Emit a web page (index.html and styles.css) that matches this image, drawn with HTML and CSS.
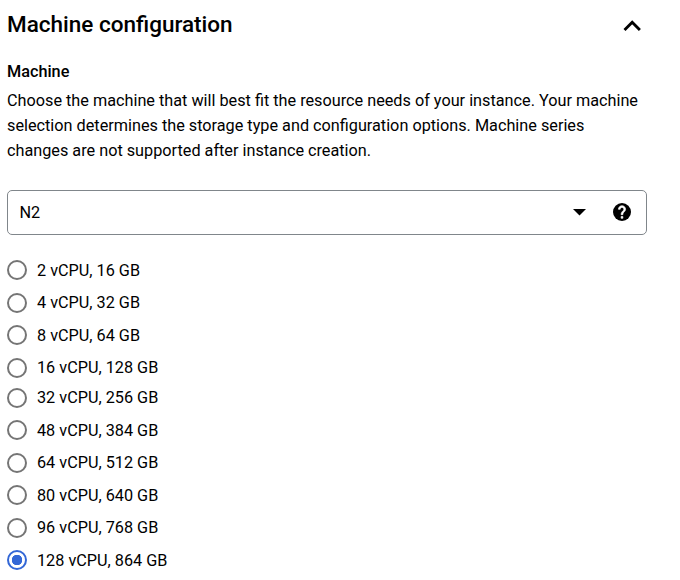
FILE: index.html
```html
<!DOCTYPE html>
<html lang="en"><head><meta charset="utf-8"><title>Machine configuration</title><link rel="stylesheet" href="styles.css"></head>
<body>
<main class="panel">
<header class="head"><h1>Machine configuration</h1><svg class="chevron" viewBox="0 0 24 24"><path d="M4.500 16 12.200 8.200 19.900 16" fill="none" stroke="#000" stroke-width="2.850"/></svg></header>
<h2>Machine</h2>
<p class="desc">Choose the machine that will best fit the resource needs of your instance. Your machine<br>selection determines the storage type and configuration options. Machine series<br>changes are not supported after instance creation.</p>
<div class="select"><span class="value">N2</span><svg class="arrow" viewBox="0 0 13 6.500"><path d="M0 0h13L6.500 6.500z"/></svg><svg class="help" viewBox="2 2 20 20"><circle cx="12" cy="12" r="10"/><path d="M13 19h-2v-2h2zM15.070 11.250l-.9.920C13.450 12.900 13 13.500 13 15h-2v-.5c0-1.100.45-2.100 1.170-2.830l1.240-1.260c.37-.36.59-.86.59-1.410 0-1.100-.9-2-2-2s-2 .9-2 2H8c0-2.210 1.790-4 4-4s4 1.790 4 4c0 .88-.36 1.680-.93 2.250z" fill="#fff" stroke="#fff" stroke-width=".7"/></svg></div>
<div class="options">
<label class="opt"><span class="radio"></span><span class="label">2 vCPU, 16 GB</span></label>
<label class="opt"><span class="radio"></span><span class="label">4 vCPU, 32 GB</span></label>
<label class="opt"><span class="radio"></span><span class="label">8 vCPU, 64 GB</span></label>
<label class="opt tight"><span class="radio"></span><span class="label">16 vCPU, 128 GB</span></label>
<label class="opt"><span class="radio"></span><span class="label">32 vCPU, 256 GB</span></label>
<label class="opt"><span class="radio"></span><span class="label">48 vCPU, 384 GB</span></label>
<label class="opt"><span class="radio"></span><span class="label">64 vCPU, 512 GB</span></label>
<label class="opt"><span class="radio"></span><span class="label">80 vCPU, 640 GB</span></label>
<label class="opt"><span class="radio"></span><span class="label">96 vCPU, 768 GB</span></label>
<label class="opt"><span class="radio on"></span><span class="label">128 vCPU, 864 GB</span></label>
</div>
</main>
</body></html>
```
FILE: styles.css
```css
*{box-sizing:border-box}
body{margin:0;background:#fff;color:#000;font-family:Roboto,"Liberation Sans",sans-serif;font-size:16.24px;overflow:hidden}
.panel{width:647px;padding-left:7px}
.head{display:flex;align-items:center;justify-content:space-between;height:48px;padding-right:3px}
h1{margin:0;font-size:22.5px;font-weight:500;line-height:30px}
.chevron{width:24px;height:24px;margin-top:4px}
h2{margin:14px 0 0;font-size:16.25px;font-weight:500;line-height:20px}
.desc{margin:6px 0 0;line-height:25px;white-space:nowrap}
.select{display:flex;align-items:center;height:45px;margin-top:27px;padding:0 15px 0 11.5px;border:1px solid #80868b;border-radius:5px}
.value{flex:1}
.arrow{width:13px;height:6.5px;margin-right:27px}
.help{width:18px;height:18px;margin-top:-1px}
.options{margin-top:18.75px}
.opt{display:flex;align-items:center;gap:10px;height:32.5px;line-height:20px}
.label{margin-top:1.5px}
.tight{margin-bottom:-2.5px}
.radio{width:20px;height:20px;border:2px solid #757575;border-radius:50%}
.on{border-color:#3367d6;background:radial-gradient(circle,#3367d6 5px,#fff 5.5px)}
```
